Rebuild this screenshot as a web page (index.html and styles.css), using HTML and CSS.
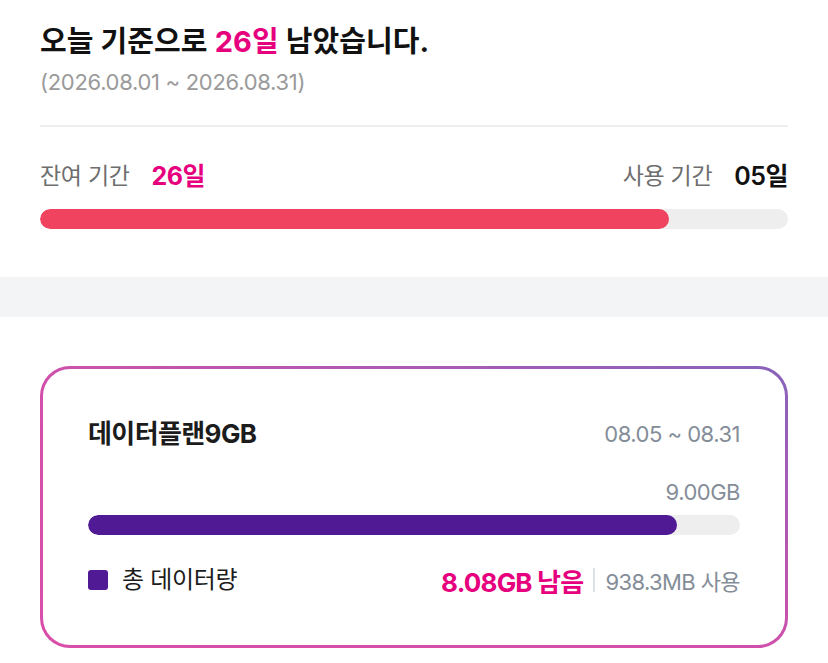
FILE: index.html
```html
<!DOCTYPE html>
<html lang="ko">
<head>
    <meta charset="UTF-8">
    <meta name="viewport" content="width=device-width, initial-scale=1.0">
    <title>데이터 사용량</title>
    <link rel="stylesheet" href="styles.css">
</head>
<body>
    <div class="period">
        <h1 class="period-title">오늘 기준으로 <em>26일</em> 남았습니다.</h1>
        <p class="period-range">(2026.08.01 ~ 2026.08.31)</p>

        <div class="period-stats">
            <div class="stat">
                <span class="stat-label">잔여 기간</span>
                <span class="stat-value pink">26일</span>
            </div>
            <div class="stat">
                <span class="stat-label">사용 기간</span>
                <span class="stat-value">05일</span>
            </div>
        </div>
        <div class="bar">
            <div class="bar-fill red" style="width: 84.1%"></div>
        </div>
    </div>

    <div class="gap"></div>

    <div class="plan-wrap">
        <div class="plan-card">
            <div class="plan-head">
                <h2 class="plan-name">데이터플랜9GB</h2>
                <span class="plan-date">08.05 ~ 08.31</span>
            </div>
            <div class="plan-total">9.00GB</div>
            <div class="bar">
                <div class="bar-fill purple" style="width: 90.3%"></div>
            </div>
            <div class="plan-legend">
                <div class="legend-name">
                    <span class="legend-dot"></span>
                    총 데이터량
                </div>
                <div class="legend-usage">
                    <span class="left">8.08GB 남음</span>
                    <span class="sep"></span>
                    <span class="used">938.3MB 사용</span>
                </div>
            </div>
        </div>
    </div>
</body>
</html>
```

FILE: styles.css
```css
* {
    margin: 0;
    padding: 0;
    box-sizing: border-box;
}

body {
    font-family: 'Inter', 'Noto Sans CJK KR', sans-serif;
    background: white;
    color: #111;
}

.period {
    padding: 24px 40px 48px;
}

.period-title {
    font-size: 29px;
    font-weight: 700;
    line-height: 36px;
    letter-spacing: 0.1px;
}

.period-title em,
.pink {
    font-style: normal;
    color: #e6007e;
}

.period-range {
    margin-top: 8px;
    font-size: 22px;
    line-height: 28px;
    color: #9a9a9a;
    letter-spacing: -0.3px;
}

.period-stats {
    margin-top: 29px;
    padding-top: 34px;
    border-top: 2px solid #eeeeee;
    display: flex;
    justify-content: space-between;
}

.stat {
    display: flex;
    align-items: center;
    gap: 22px;
}

.stat-label {
    font-size: 23px;
    line-height: 30px;
    color: #6e6e6e;
    letter-spacing: -0.3px;
}

.stat-value {
    font-size: 25px;
    font-weight: 600;
    line-height: 30px;
    letter-spacing: -0.5px;
}

.stat-value.pink {
    font-weight: 700;
}

.bar {
    margin-top: 18px;
    height: 20px;
    background: #eeeeee;
    border-radius: 10px;
    overflow: hidden;
}

.bar-fill {
    height: 100%;
    border-radius: 10px;
}

.bar-fill.red {
    background: #f0435f;
}

.bar-fill.purple {
    background: #4f1a94;
}

.gap {
    height: 40px;
    background: #f3f4f6;
}

.plan-wrap {
    padding: 49px 40px 0;
}

.plan-card {
    border: 3px solid transparent;
    border-radius: 30px;
    background:
        linear-gradient(white, white) padding-box,
        linear-gradient(to bottom left, #8763bb 0%, #d44fa9 55%, #d94ea8 100%) border-box;
    padding: 49px 45px 49px;
}

.plan-head {
    display: flex;
    justify-content: space-between;
    align-items: center;
}

.plan-name {
    font-size: 26px;
    font-weight: 700;
    line-height: 32px;
    color: #1c1c1c;
    letter-spacing: -0.6px;
}

.plan-date {
    font-size: 22px;
    color: #848d98;
    letter-spacing: -0.5px;
}

.plan-total {
    margin-top: 28px;
    text-align: right;
    font-size: 22px;
    line-height: 28px;
    color: #848d98;
    letter-spacing: -0.5px;
}

.plan-total + .bar {
    margin-top: 9px;
}

.plan-legend {
    margin-top: 29px;
    display: flex;
    justify-content: space-between;
    align-items: center;
    height: 32px;
}

.legend-name {
    display: flex;
    align-items: center;
    gap: 14px;
    font-size: 24px;
    line-height: 32px;
    color: #1c1c1c;
    letter-spacing: -0.3px;
}

.legend-dot {
    width: 20px;
    height: 20px;
    border-radius: 3px;
    background: #4f1a94;
}

.legend-usage {
    display: flex;
    align-items: center;
    gap: 10px;
}

.legend-usage .left {
    font-size: 26px;
    font-weight: 700;
    color: #e6007e;
    letter-spacing: -0.8px;
}

.legend-usage .sep {
    width: 2px;
    height: 24px;
    background: #dde1e6;
}

.legend-usage .used {
    font-size: 22px;
    color: #848d98;
    letter-spacing: -0.6px;
}
```
